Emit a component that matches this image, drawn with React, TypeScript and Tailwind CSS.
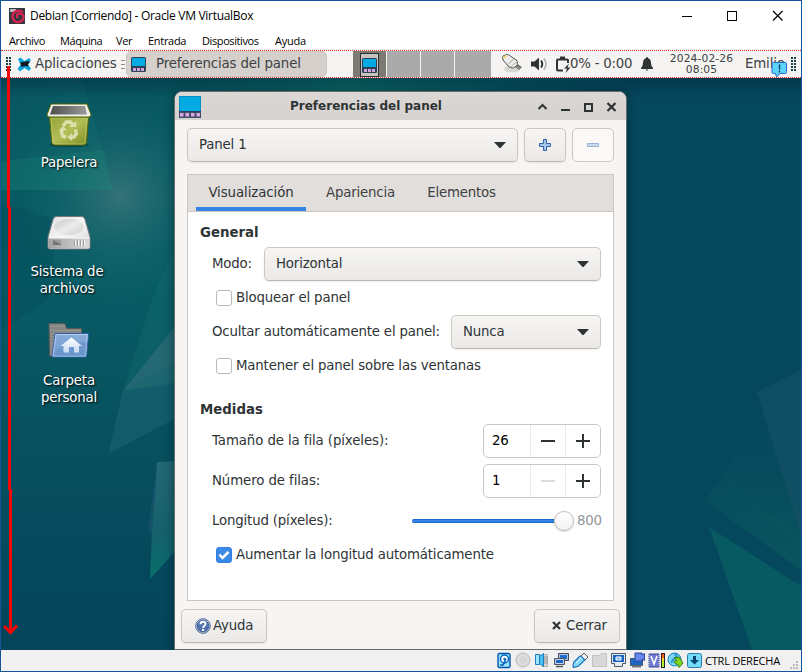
import React from 'react';

const dv = "font-['DejaVu_Sans',sans-serif]";
const win = "font-['Open_Sans',sans-serif]";

function PanelIcon() {
  return (
    <svg width="22" height="22" viewBox="0 0 22 22" className="shrink-0">
      <rect width="22" height="22" fill="#434c6b" />
      <rect width="22" height="15" fill="#0a8fc2" />
      <rect x="1" y="1" width="20" height="14" fill="#02abe2" />
      <rect y="15" width="22" height="1" fill="#2f3f5c" />
      {[1, 6.5, 12, 17.5].map((x) => (
        <rect key={x} x={x} y="17" width="3.500" height="3.500" fill="#d9a9e0" />
      ))}
    </svg>
  );
}

function PanelIconSmall() {
  return (
    <svg width="15" height="15" viewBox="0 0 15 15">
      <rect width="15" height="15" rx="1.500" fill="#2d4257" />
      <path d="M1 1h13v8H1z" fill="#02abe2" />
      <path d="M2 11h3v3H2zM6 11h3v3H6zM10 11h3v3h-3z" fill="#d3a6dc" />
    </svg>
  );
}

function Wallpaper() {
  return (
    <svg className="absolute inset-0" width="800" height="572" viewBox="1 78 800 572" preserveAspectRatio="none">
      <defs>
        <linearGradient id="base" x1="0" y1="0" x2="0" y2="1">
          <stop offset="0" stopColor="#075560" />
          <stop offset=".35" stopColor="#075c65" />
          <stop offset=".6" stopColor="#07525f" />
          <stop offset=".85" stopColor="#05485d" />
          <stop offset="1" stopColor="#05455b" />
        </linearGradient>
        <linearGradient id="side" x1="0" y1="0" x2="1" y2="0">
          <stop offset=".5" stopColor="#05475d" stopOpacity="0" />
          <stop offset=".78" stopColor="#05475d" />
        </linearGradient>
        <radialGradient id="glow" gradientUnits="userSpaceOnUse" cx="120" cy="196" r="115">
          <stop offset="0" stopColor="#35737a" />
          <stop offset=".25" stopColor="#286e74" stopOpacity=".75" />
          <stop offset=".6" stopColor="#17686f" stopOpacity=".38" />
          <stop offset="1" stopColor="#0a6068" stopOpacity="0" />
        </radialGradient>
        <radialGradient id="top" gradientUnits="userSpaceOnUse" cx="350" cy="88" r="230">
          <stop offset="0" stopColor="#0b6c68" />
          <stop offset="1" stopColor="#075560" stopOpacity="0" />
        </radialGradient>
        <linearGradient id="left" x1="0" y1="0" x2="1" y2="1">
          <stop offset="0" stopColor="#0a6066" stopOpacity=".3" />
          <stop offset="1" stopColor="#1e8078" stopOpacity=".7" />
        </linearGradient>
        <linearGradient id="shard" x1="0" y1="0" x2="0" y2="1">
          <stop offset="0" stopColor="#256b76" />
          <stop offset=".6" stopColor="#17636f" />
          <stop offset="1" stopColor="#08736c" />
        </linearGradient>
        <linearGradient id="shade" x1="0" y1="0" x2="0" y2="1">
          <stop offset="0" stopColor="#002c3c" stopOpacity=".5" />
          <stop offset="1" stopColor="#002c3c" stopOpacity="0" />
        </linearGradient>
        <linearGradient id="low" x1="0" y1="0" x2="0" y2="1">
          <stop offset="0" stopColor="#09585f" stopOpacity="0" />
          <stop offset="1" stopColor="#09585f" />
        </linearGradient>
      </defs>
      <rect x="1" y="78" width="800" height="572" fill="url(#base)" />
      <rect x="1" y="78" width="800" height="572" fill="url(#side)" />
      <rect x="1" y="78" width="600" height="300" fill="url(#top)" />
      <rect x="1" y="78" width="240" height="260" fill="url(#glow)" />
      <polygon points="1,78 82,78 113,190 1,190" fill="url(#left)" opacity=".4" />
      <polygon points="1,161 104,150 113,190 1,190" fill="#1b8478" opacity=".28" />
      <polygon points="1,203 58,220 48,300 1,330" fill="#044a5b" opacity=".3" />
      <polygon points="123,391 152,300 180,235 180,380" fill="#1a7073" opacity=".3" />
      <polygon points="123,391 180,320 180,362" fill="#39717d" opacity=".5" />
      <polygon points="123,391 180,362 180,384" fill="#2c7079" opacity=".5" />
      <polygon points="108,454 123,391 180,384 180,416" fill="#21697a" opacity=".45" />
      <polygon points="157,462 180,461 180,546 150,579 152,530" fill="url(#shard)" opacity=".9" />
      <polygon points="157,462 148,530 152,533 155,490" fill="#165369" opacity=".8" />
      <polygon points="705,501 757,423 769,426 801,520 801,570" fill="url(#low)" opacity=".8" />
      <polygon points="757,392 801,370 801,540 795,515" fill="#135065" opacity=".85" />
      <polygon points="720,480 801,535 801,548" fill="#075860" opacity=".4" />
      <polygon points="709,527 801,586 801,650 752,650" fill="#075a62" />
      <rect x="1" y="78" width="800" height="20" fill="url(#shade)" />
    </svg>
  );
}

function TrashIcon() {
  return (
    <svg width="46" height="46" viewBox="0 0 46 46" className="-ml-px">
      <defs>
        <linearGradient id="tb" x1="0" y1="0" x2="1" y2="1">
          <stop offset="0" stopColor="#95a43a" />
          <stop offset=".5" stopColor="#b2bd55" />
          <stop offset="1" stopColor="#7d8c21" />
        </linearGradient>
        <linearGradient id="ti" x1="0" y1="0" x2="1" y2="0">
          <stop offset="0" stopColor="#4c4f4d" />
          <stop offset="1" stopColor="#9a9b98" />
        </linearGradient>
      </defs>
      <ellipse cx="23" cy="42" rx="20" ry="2.500" fill="#003a3c" opacity=".5" />
      <path d="M3.500 14h39l-2 25.500q-.4 2.500-3 2.500H9q-3 0-3.200-2.500z" fill="url(#tb)" stroke="#596400" />
      <path d="M5 15h36l-2 23.500q-.4 2.500-2 2.500H9q-2 0-2.200-2.500z" fill="none" stroke="#c7d27a" opacity=".6" />
      <path d="M5 1h36L45 11.500q0 2.500-2 2.500H3q-2 0-2-2.500z" fill="#eeefe9" stroke="#526000" />
      <path d="M7 3h32l2 8.500H4z" fill="url(#ti)" />
      <g transform="translate(3.500 3) scale(.84)" opacity=".9">
        <g fill="none" stroke="#e0e6b7" strokeWidth="4">
          <path d="M16 24l4-5h5l3 4" />
          <path d="M31 28l1 5-3 4h-4" />
          <path d="M20 37l-4-1-2-5 2-3" />
        </g>
        <g fill="#e0e6b7">
          <path d="M23 25h9v-7z" />
          <path d="M27 32v10l-6-5z" />
          <path d="M11 29l5-5 5 5z" />
        </g>
      </g>
    </svg>
  );
}

function DriveIcon() {
  return (
    <svg width="46" height="36" viewBox="0 0 46 36" className="ml-[4px]">
      <defs>
        <linearGradient id="dt" x1="0" y1="0" x2="1" y2="1">
          <stop offset="0" stopColor="#dedede" />
          <stop offset=".5" stopColor="#f6f6f6" />
          <stop offset="1" stopColor="#d4d4d4" />
        </linearGradient>
        <linearGradient id="df" x1="0" y1="0" x2="1" y2="0">
          <stop offset="0" stopColor="#a2a2a2" />
          <stop offset="1" stopColor="#dadada" />
        </linearGradient>
        <linearGradient id="dd" x1="0" y1="0" x2="1" y2="1">
          <stop offset=".3" stopColor="#d9d9d9" />
          <stop offset=".5" stopColor="#ececec" />
          <stop offset=".7" stopColor="#dedede" />
        </linearGradient>
      </defs>
      <path d="M10 1.500h26q2 0 3 3L44 22v10q0 2-2 2H4q-2 0-2-2V22L7 4.500q1-3 3-3z" fill="url(#dt)" stroke="#74787a" />
      <ellipse cx="23" cy="12" rx="15.500" ry="9" fill="url(#dd)" stroke="#f4f4f4" />
      <path d="M2.500 23h41v9q0 1.500-1.500 1.500H4q-1.500 0-1.500-1.500z" fill="url(#df)" />
      <path d="M3 23h40" stroke="#fafafa" />
      <path d="M7 25h8v5H7z" fill="#9b9b9b" />
      <path d="M7 25l8 4.500V30H7z" fill="#747474" />
      <path d="M29.500 25v6M32.500 25v6M35.500 25v6M38.500 25v6" stroke="#f9f9f9" />
      <path d="M28.500 25v6M31.500 25v6M34.500 25v6M37.500 25v6" stroke="#8e8e8e" strokeWidth=".8" />
    </svg>
  );
}

function FolderIcon() {
  return (
    <svg width="42" height="37" viewBox="0 0 42 37">
      <defs>
        <linearGradient id="ff" x1="0" y1="0" x2="0" y2="1">
          <stop offset="0" stopColor="#8aadd9" />
          <stop offset="1" stopColor="#6d9bd1" />
        </linearGradient>
        <linearGradient id="fh" x1="0" y1="0" x2="0" y2="1">
          <stop offset="0" stopColor="#ffffff" />
          <stop offset="1" stopColor="#c8daf0" />
        </linearGradient>
      </defs>
      <path d="M1 1.500h16l1.500 5h15V34H1.500z" fill="#868684" stroke="#575957" />
      <path d="M2 4.500h15M2 8.500h31M2 11.500h31M2 14.500h4M2 17.500h4M2 20.500h3M2 23.500h3M2 26.500h2" stroke="#959593" />
      <path d="M7 11.500h33.500L38.500 35H4z" fill="url(#ff)" stroke="#315fa5" />
      <path d="M8 12.500h31.300L37.500 34H5z" fill="none" stroke="#b4cdee" />
      <path d="M6 31Q17 18 39 20l-1.500 14H5z" fill="#5b88c4" opacity=".35" />
      <path d="M23.500 15.500L34 24h-3v6.500h-5V25h-5v5.500h-5.500V24H12.500z" fill="url(#fh)" />
    </svg>
  );
}

function DesktopItem({ className, icon, lines }: { className: string; icon: React.ReactNode; lines: string[] }) {
  return (
    <div className={`absolute flex flex-col items-center ${className}`}>
      {icon}
      <div className="flex flex-col items-center text-center text-[13.33px] leading-[17px] tracking-[-0.17px] text-white [text-shadow:1px_1px_2px_#000]">
        {lines.map((l) => (
          <span key={l} className="whitespace-nowrap">{l}</span>
        ))}
      </div>
    </div>
  );
}

const btn = 'border border-[#cdc7c2] border-b-[#bfb8b1] rounded-[5px] bg-linear-to-b from-[#f6f5f4] to-[#eae9e7] shadow-[0_1px_2px_rgba(0,0,0,0.07)]';

function Combo({ text, className }: { text: string; className: string }) {
  return (
    <div className={`flex h-[34px] items-center justify-between pr-[11px] pl-[11px] ${btn} ${className}`}>
      <span className="pb-px">{text}</span>
      <svg width="12" height="6" viewBox="0 0 12 6"><path d="M0 0h12L6.500 6h-1z" fill="#2e3436" /></svg>
    </div>
  );
}

function Check({ label, on = false }: { label: string; on?: boolean }) {
  return (
    <div className="flex h-[34px] items-center pl-4">
      {on ? (
        <svg width="16" height="16" viewBox="0 0 16 16">
          <rect x=".5" y=".5" width="15" height="15" rx="2.500" fill="#3b88e6" stroke="#2f7fe0" />
          <path d="M3.500 7.500l3 3.500L12.500 5" fill="none" stroke="#fff" strokeWidth="2.500" />
        </svg>
      ) : (
        <span className="size-4 rounded-[3px] border border-[#bfb9b4] bg-white" />
      )}
      <span className="pb-px pl-1">{label}</span>
    </div>
  );
}

function Spin({ label, value, min = false }: { label: string; value: string; min?: boolean }) {
  return (
    <div className="flex h-[34px] items-center justify-between pl-3">
      <span className="pb-px tracking-[-0.1px]">{label}</span>
      <div className="flex h-[34px] w-[118px] rounded-[5px] border border-[#cdc7c2] bg-white">
        <span className="flex w-[46px] items-center pb-px pl-2 text-black">{value}</span>
        <span className="flex w-[35px] items-center justify-center border-l border-[#eceae8]">
          <svg width="14" height="14"><path d="M0 7h14" stroke={min ? '#dadbdb' : '#2e3436'} strokeWidth="2" /></svg>
        </span>
        <span className="flex w-[35px] items-center justify-center border-l border-[#eceae8]">
          <svg width="14" height="14"><path d="M0 7h14M7 0v14" stroke="#2e3436" strokeWidth="2" /></svg>
        </span>
      </div>
    </div>
  );
}

function Dialog() {
  return (
    <div className="absolute top-[13px] left-[173px] flex h-[559px] w-[453px] flex-col overflow-hidden rounded-t-[8px] border border-[#67696a] bg-[#f6f5f4] text-[13.33px] tracking-[-0.17px] text-[#2e3436] shadow-[0_2px_8px_2px_rgba(0,20,30,0.35)]">
      <div className="flex h-7 shrink-0 items-center bg-linear-to-b from-[#dbd7d4] to-[#d6d2cf] pt-px pr-[7px] pl-[4px]">
        <PanelIcon />
        <span className="flex-1 pr-[6px] pb-px text-center text-[12px] font-bold tracking-normal">Preferencias del panel</span>
        <svg width="82" height="12" viewBox="0 0 82 12" fill="none" stroke="#2e3436" strokeWidth="2">
          <path d="M1.500 8L5.500 4l4 4" />
          <path d="M24 9h9" />
          <path d="M48 3h7v7h-7z" />
          <path d="M70.500 2l8 8M78.500 2l-8 8" strokeWidth="2.300" />
        </svg>
      </div>
      <div className="mt-[8px] flex shrink-0 gap-[6px] pl-[12px]">
        <Combo text="Panel 1" className="w-[331px]" />
        <div className={`flex h-[34px] w-[42px] items-center justify-center ${btn}`}>
          <svg width="12" height="12" viewBox="0 0 12 12"><path d="M4.500.5h3v4h4v3h-4v4h-3v-4h-4v-3h4z" fill="#a3c5ea" stroke="#2f62a8" /></svg>
        </div>
        <div className="flex h-[34px] w-[42px] items-center justify-center rounded-[5px] border border-[#cdc7c2] bg-[#faf9f8]">
          <svg width="12" height="4"><path d="M.5.500h11v3H.5z" fill="#c7d9ee" stroke="#9ab3d5" /></svg>
        </div>
      </div>
      <div className="mt-3 mr-[12px] ml-[12px] flex h-[427px] shrink-0 flex-col border border-[#cdc7c2] bg-white">
        <div className="flex h-[37px] shrink-0 border-b border-[#cdc7c2] bg-[#e1dedb] pl-2">
          <div className="flex w-[110px] justify-center border-b-[4px] border-[#3584e4] pt-[8px] tracking-[-0.08px]">Visualización</div>
          <div className="ml-[8px] flex w-[93px] justify-center pt-[8px] text-[#3c4143]">Apariencia</div>
          <div className="ml-[8px] flex w-[93px] justify-center pt-[8px] text-[#3c4143]">Elementos</div>
        </div>
        <div className="flex flex-col pt-[11px] pr-3 pl-3">
          <div className="h-5 leading-5 font-bold tracking-normal">General</div>
          <div className="mt-[4px] flex h-[34px] items-center justify-between pl-3">
            <span className="pb-px">Modo:</span>
            <Combo text="Horizontal" className="w-[337px]" />
          </div>
          <Check label="Bloquear el panel" />
          <div className="flex h-[34px] items-center justify-between pl-3">
            <span className="pb-px">Ocultar automáticamente el panel:</span>
            <Combo text="Nunca" className="w-[150px]" />
          </div>
          <Check label="Mantener el panel sobre las ventanas" />
          <div className="mt-[17px] mb-[4px] h-5 leading-5 font-bold tracking-normal">Medidas</div>
          <Spin label="Tamaño de la fila (píxeles):" value="26" />
          <div className="h-[6px]" />
          <Spin label="Número de filas:" value="1" min />
          <div className="mt-[6px] flex h-[34px] items-center pl-3">
            <span className="w-[200px] shrink-0 pb-px">Longitud (píxeles):</span>
            <span className="h-1 w-[142px] shrink-0 rounded-l-full border-y border-[#1b6acb] bg-[#3584e4]" />
            <span className="size-5 shrink-0 rounded-full border border-[#c2bbb5] bg-linear-to-b from-white to-[#f3f2f1] shadow-[0_1px_2px_rgba(0,0,0,0.15)]" />
            <span className="pb-px pl-[3px] text-[#929596]">800</span>
          </div>
          <Check label="Aumentar la longitud automáticamente" on />
        </div>
      </div>
      <div className="mt-2 flex h-[34px] shrink-0 justify-between pr-[6px] pl-[6px]">
        <div className={`flex w-[86px] items-center pl-[13px] ${btn}`}>
          <svg width="16" height="16" viewBox="0 0 16 16">
            <circle cx="8" cy="8" r="7.300" fill="#f0f3f7" stroke="#44639a" />
            <circle cx="8" cy="8" r="6" fill="#5174ad" stroke="#29477b" strokeWidth=".7" />
            <path d="M5.500 6.200Q5.500 3.700 8 3.700t2.500 2.100Q10.500 7 9.300 7.800 8.200 8.500 8.200 10" fill="none" stroke="#fff" strokeWidth="1.900" />
            <rect x="7.100" y="11" width="2" height="2" fill="#fff" />
          </svg>
          <span className="pb-px pl-[2px]">Ayuda</span>
        </div>
        <div className={`flex w-[86px] items-center pl-[17px] ${btn}`}>
          <svg width="9" height="9" viewBox="0 0 9 9" className="mb-px"><path d="M1 1l7 7M8 1L1 8" stroke="#2e3436" strokeWidth="2.200" /></svg>
          <span className="pb-px pl-[5px]">Cerrar</span>
        </div>
      </div>
    </div>
  );
}

function Grip() {
  return (
    <svg width="6" height="14" viewBox="0 0 6 14" fill="#183f43" shapeRendering="crispEdges">
      {[0, 3, 6, 9, 12].map((y) => (
        <g key={y}><rect x="0" y={y} width="2" height="2" /><rect x="3" y={y} width="2" height="2" /></g>
      ))}
    </svg>
  );
}

function DesktopPanel() {
  return (
    <div className="relative flex h-7 shrink-0 items-center border-y border-dotted border-[#e8302e] bg-[#f5f4f2] text-[13.33px] tracking-[-0.14px] text-[#3c4143]">
      <span className="ml-[5px] flex w-[11px]"><Grip /></span>
      <svg width="15" height="15" viewBox="0 0 15 15">
        <path d="M1 2L3.500.5 7.500 4 12 1l2 2-3 4.500 3 4-2 2.500-4.500-3L3 14.500.5 12l3-4.500z" fill="#0aa7dd" />
        <path d="M3 5.500l3-.5 5-1 2 1-2 2 .5 3-2-1-4 .5-1 1-.5-3z" fill="#111a1e" />
      </svg>
      <span className="ml-[3px] w-[84px]">Aplicaciones</span>
      <svg width="4" height="10" className="ml-[2px]"><path d="M0 1.500h4M0 5.500h4M0 9.500h4" stroke="#8b8d8e" /></svg>
      <div className="ml-px flex h-[26px] w-[201px] items-center rounded-[5px] border border-[#cbc5c0] bg-[#d5d0cc] pl-[4px]">
        <span className="pt-px"><PanelIconSmall /></span>
        <span className="pl-[10px]">Preferencias del panel</span>
      </div>
      <div className="ml-[26px] flex h-[26px] gap-px bg-[#f5f4f2]">
        <div className="flex w-[33px] justify-center bg-[#7d7973] pt-[2px]">
          <div className="flex h-6 w-[19px] justify-center border border-[#2b3032] bg-[#c6c4c0] pt-[4px]"><PanelIconSmall /></div>
        </div>
        <div className="w-[33px] bg-[#aaa]" /><div className="w-[33px] bg-[#aaa]" /><div className="w-[36px] bg-[#aaa]" />
      </div>
      <svg width="22" height="22" viewBox="0 0 22 22" className="ml-[10px] shrink-0">
        <ellipse cx="11" cy="16" rx="8" ry="3.500" fill="#333" opacity=".15" />
        <path d="M15 12.500l4.500 3" stroke="#8a8a88" strokeWidth="4" />
        <path d="M15.500 11.500l5 3.500" stroke="#555753" strokeWidth="1" />
        <path d="M1.500 4.500Q1.500 3 3 2.500l2.500-1q1-.3 2 .3L16 7.500l.5 4.500-4 3-4.500-1-6-7z" fill="#ececea" stroke="#555753" />
        <path d="M7 11.500l5.500-5.500" stroke="#9a9c98" />
        <path d="M9.500 14l6.500-5.500" stroke="#b5b7b3" />
        <path d="M2.500 4.500l3-1.800" stroke="#f0cf60" strokeWidth="2" />
      </svg>
      <svg width="17" height="14" viewBox="0 0 17 14" className="ml-[8px] shrink-0">
        <path d="M0 4.500h3.500L8 .5v13L3.500 9.500H0z" fill="#2e3436" />
        <path d="M10 3.500q2.500 3.500 0 7" fill="none" stroke="#2e3436" strokeWidth="2" />
        <path d="M13 1.500q4 5.500 0 11" fill="none" stroke="#b2b3b3" strokeWidth="1.700" />
      </svg>
      <svg width="15" height="17" viewBox="0 0 15 17" className="ml-[8px] shrink-0">
        <path d="M7 14.500H2q-1 0-1-1v-9q0-1 1-1h9q1 0 1 1V7" fill="none" stroke="#2e3436" strokeWidth="2" />
        <path d="M4 .5h5v3H4z" fill="#2e3436" />
        <path d="M13 7.500l-5 5h3L9.500 17l5-5.500h-3z" fill="#2e3436" />
      </svg>
      <span className="-ml-px w-[62px] tracking-[-0.25px] whitespace-nowrap">0% - 0:00</span>
      <svg width="12" height="14" viewBox="0 0 12 14" className="ml-[9px] shrink-0" fill="#2e3436">
        <path d="M6 0q1 0 1 1.200Q10 2 10 6q0 3 2 5v1H0v-1q2-2 2-5 0-4 3-4.800Q5 0 6 0z" /><path d="M4.500 12.500h3L6 14z" />
      </svg>
      <div className="ml-[15px] flex w-[67px] shrink-0 flex-col items-center text-[10.67px] leading-[11px] tracking-[0.15px] whitespace-nowrap">
        <span>2024-02-26</span><span>08:05</span>
      </div>
      <span className="ml-[10px] w-[43px]">Emilio</span>
      <span className="ml-[3px] flex"><Grip /></span>
      <svg width="17" height="17" viewBox="0 0 17 17" className="absolute top-[10px] left-[770px]">
        <path d="M2.500 1.500h12q1 0 1 1v9q0 1-1 1H9l-3.500 3.500-1-3.500H2.500q-1.500 0-1.500-1v-9q0-1 1.500-1z" fill="#5bd3fb" stroke="#2869c6" />
        <path d="M8.500 3.500v5M8.500 9.500v2" stroke="#103c58" strokeWidth="1.400" />
      </svg>
    </div>
  );
}

function StatusIcons() {
  const icons: React.ReactNode[] = [
    <g key="hd"><path d="M3 1.500h10l1 1v12l-1 1H3l-1-1v-12z" fill="#9be6ff" stroke="#0056af" strokeWidth="1.400" /><circle cx="8.500" cy="7" r="4" fill="#fff" stroke="#0468c5" strokeWidth="1.500" /><path d="M4 13h3l3-6" stroke="#075db2" strokeWidth="1.600" fill="none" /><circle cx="8.500" cy="7" r="1.200" fill="#0468c5" /></g>,
    <g key="cd"><circle cx="8" cy="8" r="7" fill="#dcdcdc" stroke="#b9b9b9" /><circle cx="8" cy="8" r="2.500" fill="#eee" stroke="#c5c5c5" /><circle cx="8" cy="8" r=".8" fill="#999" /></g>,
    <g key="audio"><path d="M8.500 2.500h5v12h-5z" fill="#d5d5d5" stroke="#b5b5b5" /><path d="M10 5h4M10 7h4M10 9h4M10 11h4" stroke="#999" /><path d="M1.500 2.500h4v10h-4z" fill="#9be6ff" stroke="#207cbf" /><path d="M5.500 4.500l4-3v13l-4-3z" fill="#45c0f0" stroke="#207cbf" /></g>,
    <g key="net"><path d="M5.500 1.500h10v7h-10z" fill="#1f70d4" stroke="#444c58" /><path d="M6.500 2.500h8v5h-8z" fill="none" stroke="#b9c7d8" /><path d="M1.500 6.500h10v6h-10z" fill="#1766c9" stroke="#505866" /><path d="M2.500 7.500h8v4h-8z" fill="none" stroke="#c9d3df" /><path d="M3 14.500h7" stroke="#555" strokeWidth="1.500" /></g>,
    <g key="usb"><path d="M9 4l3-3 4 4-3 3z" fill="#eee" stroke="#555" /><path d="M2 10l6-6q2 0 4.500 4.500l-6 5.500-5 1.500q-1-2 .5-5.500z" fill="#83dafb" stroke="#1c70bb" strokeWidth="1.200" /><path d="M4 11l5-5" stroke="#fff" /></g>,
    <g key="folder"><path d="M1.500 3.500h7l2-2h5v13h-14z" fill="#d8d8d8" stroke="#c2c2c2" /></g>,
    <g key="display"><path d="M1.500 1.500h14v10h-3v3h-8v-3h-3z" fill="#e5e8ec" stroke="#4e5968" /><path d="M3 3h11v7H3z" fill="#1563bf" /><path d="M6 5h5v3H6z" fill="#7eb7f2" stroke="#fff" /></g>,
    <g key="rec"><path d="M1.500 6.500h12v7h-12z" fill="#1c66c4" stroke="#475569" /><path d="M3 14.500h9" stroke="#777" strokeWidth="2" /><path d="M6 1h7v2l2.500-1.500v7L13 7v2H6z" fill="#6689eb" stroke="#3547a6" /></g>,
    <g key="cpu"><path d="M1 2h10v13H1z" fill="#6d79ce" stroke="#3e4b9c" /><path d="M3 4l3 8 3-8" fill="none" stroke="#fff" strokeWidth="1.600" /><path d="M1 3v12M11 3v12" stroke="#fff" strokeDasharray="1 1" /><path d="M13 1h4v15h-4z" fill="#222" /><path d="M14 2h2v4h-2z" fill="#ff5b21" /><path d="M14 6h2v3h-2z" fill="#ffd22e" /><path d="M14 9h2v6h-2z" fill="#b7f032" /></g>,
    <g key="globe"><circle cx="7.500" cy="7.500" r="6.500" fill="#77d8f8" stroke="#2380ae" /><path d="M7 2q5 1 1 4t-3 5" fill="none" stroke="#2997d3" strokeWidth="2" /><path d="M7 6l5-1 4 6-4 4.500-1-3q-3 0-4-3l3-1z" fill="#82d51d" stroke="#377c1d" /></g>,
    <g key="down"><rect x="1.500" y="1.500" width="14" height="14" rx="2" fill="#73dcfa" stroke="#287ba8" /><path d="M7 4h3v4h3l-4.500 4.500L4 8h3z" fill="#07456f" /></g>,
  ];
  return (
    <div className="flex gap-[2px]">
      {icons.map((icon, i) => (
        <svg key={i} width="17" height="17" viewBox="0 0 17 17">{icon}</svg>
      ))}
    </div>
  );
}

export default function App() {
  return (
    <div className={`relative flex h-[672px] w-[802px] flex-col overflow-hidden border border-[#12539a] bg-white ${dv}`}>
      <div className={`flex h-[29px] shrink-0 items-center pr-[17px] pl-2 text-black ${win}`}>
        <svg width="16" height="16" viewBox="0 0 16 16">
          <rect width="16" height="16" fill="#35383e" />
          <path d="M1 1h6v3H1z" fill="#b9bcc1" />
          <path d="M14 4Q6 1 4 6t3 8q5 1 7-3t-2-5-4 1 0 3" fill="none" stroke="#de2252" strokeWidth="2.200" />
        </svg>
        <span className="ml-[5px] flex-1 text-[12px] tracking-[-0.3px] whitespace-nowrap">Debian [Corriendo] - Oracle VM VirtualBox</span>
        <svg width="102" height="12" viewBox="0 0 102 12" fill="none" stroke="#000">
          <path d="M0 6.500h10M45.500 1.500h9v9h-9z" shapeRendering="crispEdges" /><path d="M91 1l9.500 9.500M100.500 1L91 10.500" strokeWidth="1.200" />
        </svg>
      </div>
      <div className={`flex h-[20px] shrink-0 items-center border-b border-[#ededed] pt-[3px] pl-[8px] text-[11px] text-black ${win}`}>
        <span className="w-[51px] tracking-[-0.35px]">Archivo</span>
        <span className="w-[56px] tracking-[-0.4px]">Máquina</span>
        <span className="w-[32px] tracking-[-0.35px]">Ver</span>
        <span className="w-[54px] tracking-[-0.3px]">Entrada</span>
        <span className="w-[73px] tracking-[-0.4px]">Dispositivos</span>
        <span className="tracking-[-0.25px]">Ayuda</span>
      </div>
      <DesktopPanel />
      <div className="relative h-[572px] shrink-0 overflow-hidden">
        <Wallpaper />
        <DesktopItem className="top-[25px] left-[18px] w-[100px] gap-[5px]" icon={<TrashIcon />} lines={['Papelera']} />
        <DesktopItem className="top-[137px] left-[16px] w-[100px] gap-[12px]" icon={<DriveIcon />} lines={['Sistema de', 'archivos']} />
        <DesktopItem className="top-[244px] left-[18px] w-[100px] gap-[13px]" icon={<FolderIcon />} lines={['Carpeta', 'personal']} />
        <Dialog />
      </div>
      <div className={`flex h-[21px] shrink-0 items-center justify-end bg-[#f0f0f0] pr-[3px] text-[11px] text-black ${win}`}>
        <StatusIcons />
        <span className="ml-[2px] w-[85px] pt-px tracking-[-0.2px] whitespace-nowrap">CTRL DERECHA</span>
        <svg width="8" height="8" className="mt-[9px]" fill="#bbb"><path d="M6 0h2v2H6zM3 3h2v2H3zM6 3h2v2H6zM0 6h2v2H0zM3 6h2v2H3zM6 6h2v2H6z" /></svg>
      </div>
      <svg className="pointer-events-none absolute -top-px -left-px" width="802" height="672" viewBox="0 0 802 672">
        <path d="M.5 50v114M.5 558v114" stroke="#0878b4" />
        <path d="M.5 164v394" stroke="#a19e99" />
        <path d="M.5 173v8M.5 254v18" stroke="#4a67ad" />
        <path d="M.5 290v16" stroke="#a41d4b" />
        <path d="M801.500 157v361" stroke="#8a9da6" />
        <path d="M8.500 66v142M9.500 207v283M10.500 489v143" stroke="#f40606" strokeWidth="3" />
        <path d="M4 626l6.500 6.500L17 625.500" fill="none" stroke="#f40606" strokeWidth="3" />
      </svg>
    </div>
  );
}
